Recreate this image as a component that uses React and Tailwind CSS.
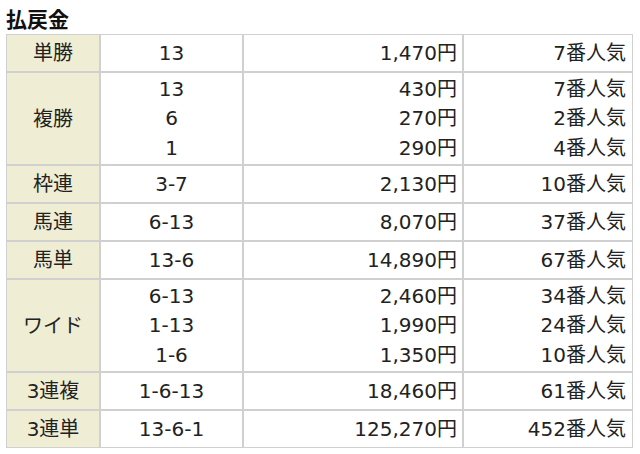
import React from 'react';

const rows = [
  { label: '単勝', items: [['13', '1,470円', '7番人気']] },
  {
    label: '複勝',
    items: [
      ['13', '430円', '7番人気'],
      ['6', '270円', '2番人気'],
      ['1', '290円', '4番人気'],
    ],
  },
  { label: '枠連', items: [['3-7', '2,130円', '10番人気']] },
  { label: '馬連', items: [['6-13', '8,070円', '37番人気']] },
  { label: '馬単', items: [['13-6', '14,890円', '67番人気']] },
  {
    label: 'ワイド',
    items: [
      ['6-13', '2,460円', '34番人気'],
      ['1-13', '1,990円', '24番人気'],
      ['1-6', '1,350円', '10番人気'],
    ],
  },
  { label: '3連複', items: [['1-6-13', '18,460円', '61番人気']] },
  { label: '3連単', items: [['13-6-1', '125,270円', '452番人気']] },
];

const cell = 'border border-[#d0d0d0] flex flex-col justify-center';

const App = () => {
  return (
    <div
      className="w-[640px] h-[454px] bg-white text-[#222] overflow-hidden"
      style={{ fontFamily: '"Noto Sans CJK JP", "Noto Sans", sans-serif' }}
    >
      <h2 className="h-[34px] pl-[6px] pt-[4px] text-[21px] font-bold leading-[28px] text-[#111]">
        払戻金
      </h2>
      <div
        className="ml-[6px] w-[627px] grid grid-cols-[94px_143px_220px_170px] text-[20px]"
        style={{ fontFamily: '"DejaVu Sans", "Noto Sans CJK JP", sans-serif' }}
      >
        {rows.map((row) => {
          const multi = row.items.length > 1;
          const h = multi ? 'h-[93px]' : 'h-[38px]';
          return (
            <React.Fragment key={row.label}>
              <div className={`${cell} ${h} bg-[#efedd3] items-center`}>{row.label}</div>
              <div className={`${cell} ${h} items-center pt-[1px]`}>
                {row.items.map((it, i) => (
                  <div key={i} className="leading-[29.5px]">{it[0]}</div>
                ))}
              </div>
              <div className={`${cell} ${h} items-end pr-[5px] pt-[1px]`}>
                {row.items.map((it, i) => (
                  <div key={i} className="leading-[29.5px]">{it[1]}</div>
                ))}
              </div>
              <div className={`${cell} ${h} items-end pr-[6px] pt-[1px]`}>
                {row.items.map((it, i) => (
                  <div key={i} className="leading-[29.5px]">{it[2]}</div>
                ))}
              </div>
            </React.Fragment>
          );
        })}
      </div>
    </div>
  );
};

export default App;
